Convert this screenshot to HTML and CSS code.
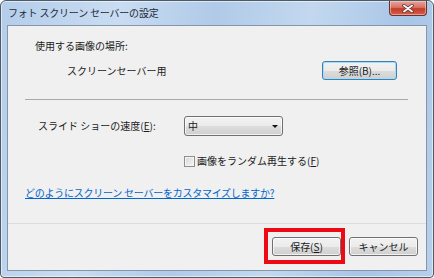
FILE: index.html
```html
<!DOCTYPE html>
<html lang="ja">
<head>
    <meta charset="UTF-8">
    <title>フォト スクリーン セーバーの設定</title>
    <link rel="stylesheet" href="styles.css">
</head>
<body>
    <div class="window">
        <div class="titlebar">
            <span class="title">フォト スクリーン セーバーの設定</span>
            <button class="close">
                <svg width="12" height="9" viewBox="0 0 12 9">
                    <path d="M2 1.5 L10 7.5 M10 1.5 L2 7.5" stroke="#5a2a2a" stroke-width="3.4" stroke-linecap="round"/>
                    <path d="M2 1.5 L10 7.5 M10 1.5 L2 7.5" stroke="#f4f4f4" stroke-width="2" stroke-linecap="round"/>
                </svg>
            </button>
        </div>

        <div class="client">
            <div class="content">
                <div class="label">使用する画像の場所:</div>
                <div class="location">
                    <span class="path">スクリーンセーバー用</span>
                    <button class="btn default">参照(B)...</button>
                </div>
                <hr class="sep">
                <div class="options">
                    <span class="speed-label">スライド ショーの速度(<u>E</u>):</span>
                    <div class="select">
                        <span>中</span>
                        <span class="arrow"></span>
                    </div>
                    <label class="check">
                        <span class="box"></span>画像をランダム再生する(<u>F</u>)
                    </label>
                </div>
                <a class="help" href="#">どのようにスクリーン セーバーをカスタマイズしますか?</a>
            </div>

            <div class="footer">
                <span class="marked">
                    <button class="btn">保存(<u>S</u>)</button>
                </span>
                <button class="btn">キャンセル</button>
            </div>
        </div>
    </div>
</body>
</html>
```

FILE: styles.css
```css
html, body {
    margin: 0;
    padding: 0;
    width: 434px;
    height: 278px;
    overflow: hidden;
    font-family: "Noto Sans CJK JP", "Noto Sans", sans-serif;
    font-size: 10px;
    line-height: 14px;
    color: #1b1b1b;
}

.window {
    width: 434px;
    height: 278px;
    box-sizing: border-box;
    border: 1px solid #4d5a68;
    border-radius: 6px 6px 4px 4px;
    padding: 0 6px 6px 6px;
    display: flex;
    flex-direction: column;
    background: linear-gradient(100deg, #b4cdea 0%, #c9dcf1 25%, #b0cae8 45%, #c3d8ef 65%, #a8c5e6 85%, #b7cfeb 100%);
    box-shadow: inset 0 0 0 1px rgba(255, 255, 255, 0.55);
}

.titlebar {
    height: 24px;
    display: flex;
    align-items: flex-start;
}

.title {
    padding: 5px 0 0 1px;
    color: #1e2a38;
    letter-spacing: -0.2px;
}

.close {
    margin-left: auto;
    width: 38px;
    height: 15px;
    padding: 0;
    border: 1px solid #6e2f2f;
    border-top: none;
    border-radius: 0 0 4px 4px;
    background: linear-gradient(#e7a49a 0%, #d87466 45%, #c53b2a 55%, #d2604c 100%);
    display: flex;
    align-items: center;
    justify-content: center;
    box-shadow: inset 0 0 0 1px rgba(255, 220, 210, 0.5);
}

.client {
    flex: 1;
    border: 1px solid #8396ab;
    background: #f0f0f0;
    display: flex;
    flex-direction: column;
}

.content {
    flex: 1;
    padding: 13px 18px 0 17px;
}

.label {
    margin-left: 10px;
}

.location {
    margin-top: 8px;
    display: flex;
    align-items: center;
    justify-content: space-between;
}

.path {
    margin-left: 42px;
}

.location .btn {
    width: 75px;
    margin-right: 11px;
}

.btn {
    width: 69px;
    height: 19px;
    padding: 0;
    font-family: inherit;
    font-size: 10px;
    color: #1b1b1b;
    border: 1px solid #707070;
    border-radius: 3px;
    background: linear-gradient(#f2f2f2 0%, #ebebeb 50%, #dddddd 51%, #cfcfcf 100%);
    box-shadow: inset 0 0 0 1px rgba(255, 255, 255, 0.7);
}

.btn.default {
    border-color: #3c7fb1;
    box-shadow: inset 0 0 0 1px #a8dcf6;
}

.sep {
    margin: 19px 0 0 0;
    height: 1px;
    border: none;
    background: #a9a9a9;
}

.options {
    margin-top: 16px;
    display: grid;
    grid-template-columns: 159px 99px;
    row-gap: 18px;
    align-items: center;
}

.speed-label {
    padding-left: 13px;
}

.select {
    height: 20px;
    box-sizing: border-box;
    border: 1px solid #707070;
    border-radius: 3px;
    padding: 0 4px 0 3px;
    display: flex;
    align-items: center;
    justify-content: space-between;
    background: linear-gradient(#f2f2f2 0%, #ebebeb 50%, #dddddd 51%, #cfcfcf 100%);
    box-shadow: inset 0 0 0 1px rgba(255, 255, 255, 0.7);
}

.arrow {
    width: 0;
    height: 0;
    border-left: 3px solid transparent;
    border-right: 3px solid transparent;
    border-top: 3px solid #111;
}

.check {
    grid-column: 2 / span 2;
    display: flex;
    align-items: center;
    white-space: nowrap;
}

.box {
    width: 11px;
    height: 11px;
    box-sizing: border-box;
    margin-right: 2px;
    border: 1px solid #8e8f8f;
    background: linear-gradient(135deg, #d8d8d8, #f6f6f6);
    box-shadow: inset 0 0 0 1px #f4f4f4;
}

.help {
    display: block;
    margin-top: 18px;
    color: #0066cc;
    text-decoration: underline;
    letter-spacing: -0.25px;
}

.footer {
    border-top: 1px solid #dcdcdc;
    padding: 13px 8px 14px 0;
    display: flex;
    justify-content: flex-end;
    gap: 8px;
}

.marked {
    position: relative;
    display: flex;
}

.marked::after {
    content: "";
    position: absolute;
    top: -9px;
    bottom: -8px;
    left: -8px;
    right: -4px;
    border: 4px solid #ee0a14;
}
```
